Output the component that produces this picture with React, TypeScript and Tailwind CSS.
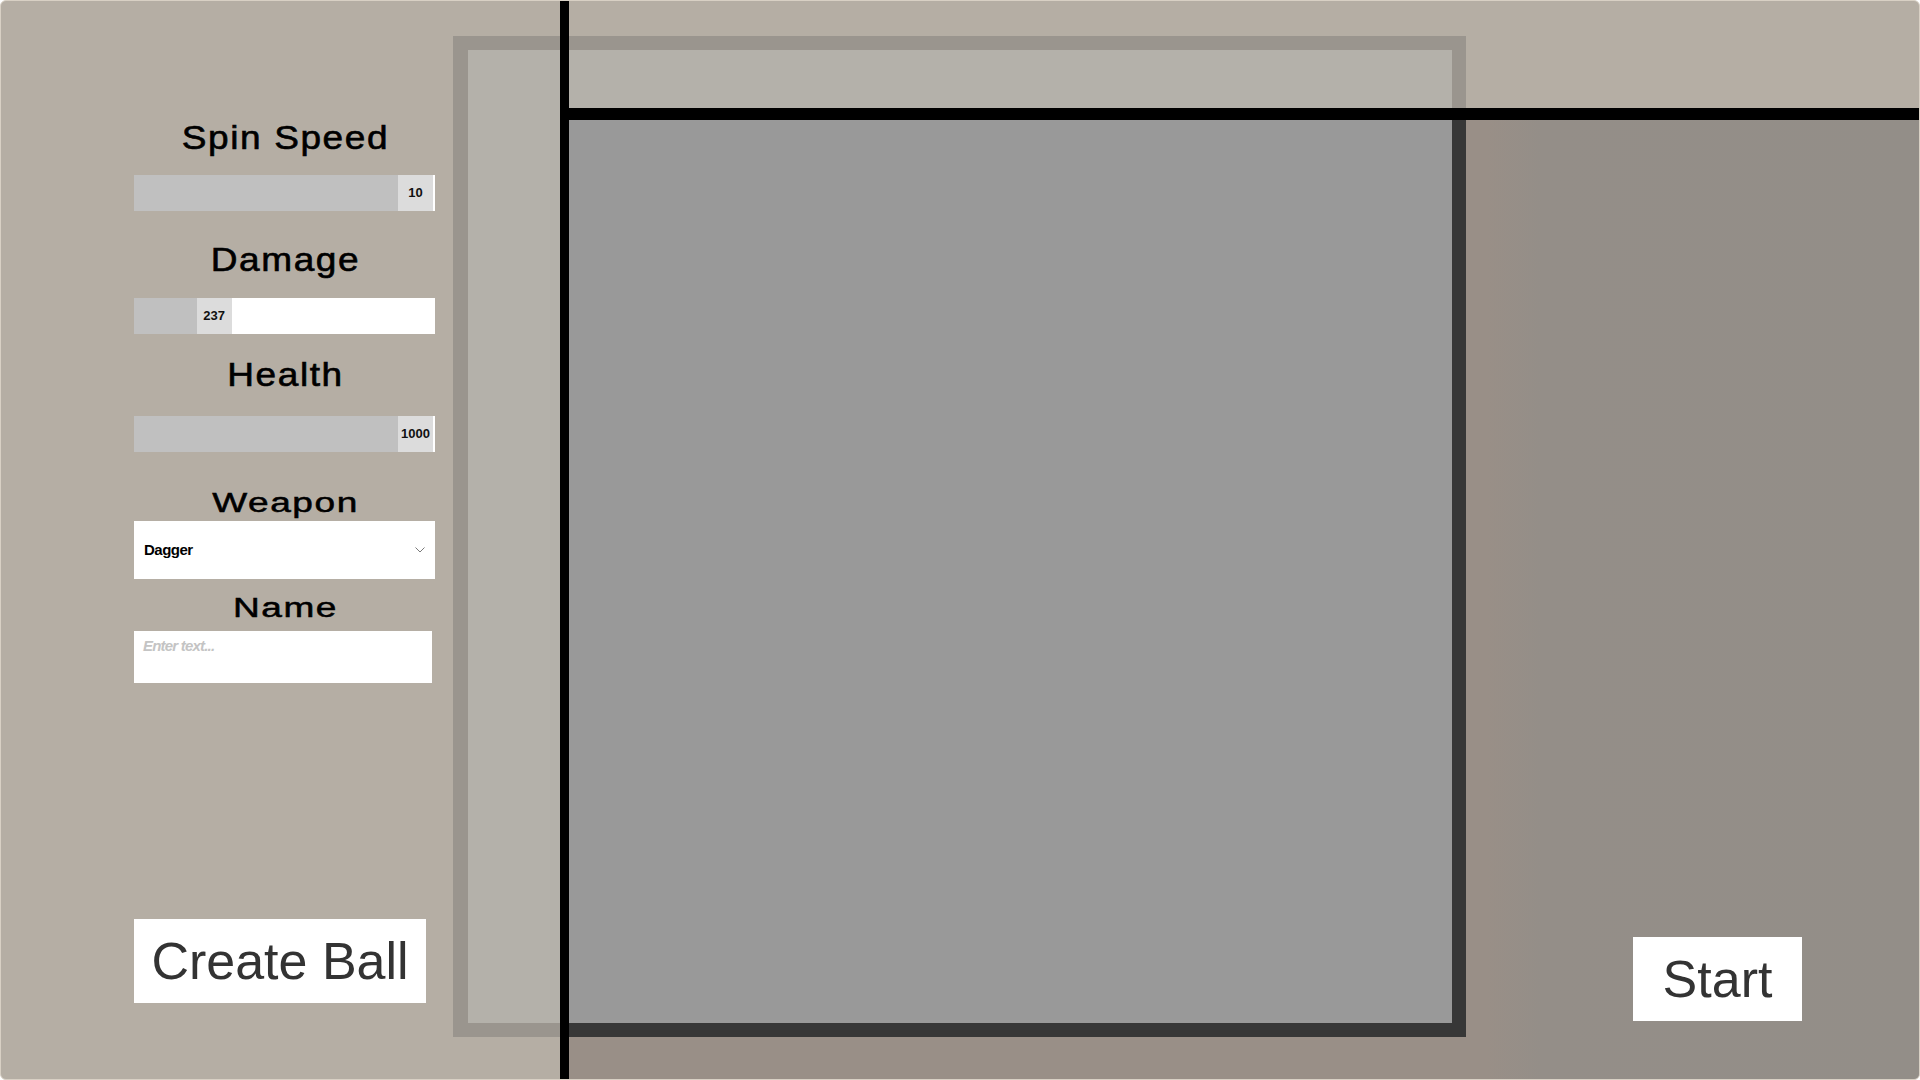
import React from "react";

const sliders = {
  spin: { value: 10, max: 10 },
  damage: { value: 237, max: 1000 },
  health: { value: 1000, max: 1000 },
};

const TRACK = 264;

const Label = ({ text, squash }: { text: string; squash?: boolean }) => (
  <div
    className={
      "h-[37px] pl-[2px] text-center text-[37px] leading-[37px] tracking-[1.6px] text-black [-webkit-text-stroke:0.7px_#000] " +
      (squash ? "scale-y-[0.75]" : "scale-y-[0.9]")
    }
  >
    {text}
  </div>
);

const Slider = ({ value, max }: { value: number; max: number }) => (
  <div className="flex h-[36px] w-[301px] bg-white">
    <div className="h-full bg-[#c0c0c0]" style={{ width: (value / max) * TRACK }} />
    <div className="flex h-full w-[35px] items-center justify-center bg-[#dcdcdc] text-[13px] font-bold text-[#111]">
      {value}
    </div>
  </div>
);

export default function App() {
  return (
    <div className="relative flex h-[1080px] w-[1920px] overflow-hidden rounded-[6px] border border-[#d8d0c4] bg-[#b5aea4] font-['Liberation_Sans',Arial,sans-serif]">
      {/* frame over the arena, light part */}
      <div className="absolute left-[452px] top-[35px] z-10 h-[1001px] w-[1013px] border-[14px] border-l-[15px] border-[#9a958e] bg-[#b4b1aa]" />

      <aside className="flex w-[559px] shrink-0 flex-col pl-[133px] pt-[118px]">
        <div className="flex w-[301px] flex-col">
          <Label text="Spin Speed" />
          <div className="mt-[19px]">
            <Slider {...sliders.spin} />
          </div>
          <div className="mt-[30px]">
            <Label text="Damage" />
          </div>
          <div className="mt-[20px]">
            <Slider {...sliders.damage} />
          </div>
          <div className="mt-[22px]">
            <Label text="Health" />
          </div>
          <div className="mt-[23px]">
            <Slider {...sliders.health} />
          </div>
          <div className="mt-[32px]">
            <Label text="Weapon" squash />
          </div>
          <div className="flex h-[58px] w-[301px] items-center justify-between bg-white pl-[10px] pr-[10px]">
            <span className="text-[15px] font-bold tracking-[-0.5px] text-black">Dagger</span>
            <svg width="10" height="6" viewBox="0 0 10 6" fill="none">
              <path d="M0.5 0.5 L5 5 L9.5 0.5" stroke="#7a7a7a" strokeWidth="1" />
            </svg>
          </div>
          <div className="mt-[10px]">
            <Label text="Name" squash />
          </div>
          <div className="mt-[5px] h-[52px] w-[298px] bg-white px-[9px] pt-[3px]">
            <span className="text-[15px] font-bold italic leading-[15px] tracking-[-0.8px] text-[#c4c4c4]">
              Enter text...
            </span>
          </div>
          <button className="mt-[236px] flex h-[84px] w-[292px] items-center justify-center bg-white text-[52px] leading-[52px] text-[#333333]">
            Create Ball
          </button>
        </div>
      </aside>

      <div className="relative z-20 w-[9px] shrink-0 bg-black" />

      <div className="flex flex-1 flex-col">
        <div className="h-[107px] shrink-0" />
        <div className="relative z-20 h-[12px] shrink-0 bg-black" />
        <div className="relative z-10 flex flex-1 items-end justify-end overflow-hidden bg-[linear-gradient(90deg,#998f87_0%,#998f87_68%,#948e88_72%,#938e88_100%)] pb-[58px] pr-[117px]">
          {/* frame over the arena, dark part */}
          <div className="absolute left-[-116px] top-[-84px] h-[1001px] w-[1013px] border-[14px] border-l-[15px] border-[#373737] bg-[#999999]" />
          <button className="relative flex h-[84px] w-[169px] items-center justify-center bg-white text-[52px] leading-[52px] text-[#333333]">
            Start
          </button>
        </div>
      </div>
    </div>
  );
}
